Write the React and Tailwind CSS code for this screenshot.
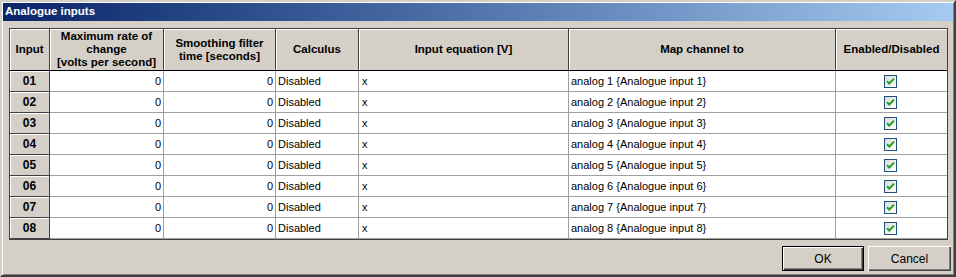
const columns = [
  { key: 'input', w: 'w-[40px]', label: ['Input'] },
  { key: 'rate', w: 'w-[114px]', label: ['Maximum rate of', 'change', '[volts per second]'] },
  { key: 'smooth', w: 'w-[112px]', label: ['Smoothing filter', 'time [seconds]'] },
  { key: 'calc', w: 'w-[83px]', label: ['Calculus'] },
  { key: 'eq', w: 'w-[210px]', label: ['Input equation [V]'] },
  { key: 'map', w: 'w-[267px]', label: ['Map channel to'] },
  { key: 'enabled', w: 'w-[111px]', label: ['Enabled/Disabled'] },
];

const rows = [1, 2, 3, 4, 5, 6, 7, 8].map((n) => ({
  id: '0' + n,
  rate: 0,
  smooth: 0,
  calc: 'Disabled',
  eq: 'x',
  map: `analog ${n} {Analogue input ${n}}`,
  enabled: true,
}));

function Check() {
  return (
    <span className="flex h-[13px] w-[13px] items-center justify-center border border-[#1c5180] bg-linear-to-br from-[#dcdcd6] to-[#ffffff]">
      <svg width="9" height="9" viewBox="0 0 9 9">
        <path d="M1 4.2 L3.3 6.5 L8 1.6" fill="none" stroke="#21a121" strokeWidth="2" />
      </svg>
    </span>
  );
}

function Button({ children, primary }) {
  return (
    <button
      className={
        'h-[25px] bg-[#d4d0c8] text-[12px] text-black ' +
        (primary
          ? 'w-[82px] border border-black shadow-[inset_1px_1px_0_#fff,inset_-1px_-1px_0_#404040,inset_-2px_-2px_0_#808080]'
          : 'w-[83px] shadow-[inset_1px_1px_0_#fff,inset_-1px_-1px_0_#404040,inset_-2px_-2px_0_#808080]')
      }
    >
      {children}
    </button>
  );
}

export default function App() {
  return (
    <div className="h-[277px] w-[956px] border-2 border-t-[#d4d0c8] border-l-[#d4d0c8] border-r-[#404040] border-b-[#404040] bg-[#d4d0c8] p-px font-['Liberation_Sans',Arial,sans-serif] shadow-[inset_1px_1px_0_#fff,inset_-1px_-1px_0_#808080]">
      {/* Title bar */}
      <div className="flex h-[18px] items-center bg-linear-to-r from-[#0a246a] to-[#a6caf0] pl-[2px] text-[11.5px] font-bold text-white">
        Analogue inputs
      </div>

      {/* Grid */}
      <div className="mx-[6px] mt-[7px] w-[939px] border border-[#404040] bg-white">
        <div className="flex h-[42px] border-b border-black">
          {columns.map((c, i) => (
            <div
              key={c.key}
              className={
                c.w +
                ' flex flex-col items-center justify-center bg-[#d4d0c8] text-center text-[11.5px] font-bold leading-[13px] text-black shadow-[inset_1px_1px_0_#fff] ' +
                (i < columns.length - 1 ? 'border-r border-[#404040]' : '')
              }
            >
              {c.label.map((l) => (
                <span key={l} className="whitespace-nowrap">{l}</span>
              ))}
            </div>
          ))}
        </div>
        {rows.map((r) => (
          <div key={r.id} className="flex h-[21px] text-[11px] text-black">
            <div className="flex w-[40px] items-center justify-center border-r border-b border-[#404040] bg-[#d4d0c8] text-[12px] font-bold shadow-[inset_1px_1px_0_#fff]">
              {r.id}
            </div>
            <div className="flex w-[114px] items-center justify-end border-r border-b border-[#a0a0a0] pr-[2px]">{r.rate}</div>
            <div className="flex w-[112px] items-center justify-end border-r border-b border-[#a0a0a0] pr-[2px]">{r.smooth}</div>
            <div className="flex w-[83px] items-center border-r border-b border-[#a0a0a0] pl-[2px]">{r.calc}</div>
            <div className="flex w-[210px] items-center border-r border-b border-[#a0a0a0] pl-[3px]">{r.eq}</div>
            <div className="flex w-[267px] items-center border-r border-b border-[#a0a0a0] pl-[2px] whitespace-nowrap">{r.map}</div>
            <div className="flex w-[111px] items-center justify-center border-b border-[#a0a0a0] pr-[2px]">
              {r.enabled && <Check />}
            </div>
          </div>
        ))}
      </div>

      {/* Buttons */}
      <div className="mt-[6px] mr-[2px] flex justify-end gap-[4px]">
        <Button primary>OK</Button>
        <Button>Cancel</Button>
      </div>
    </div>
  );
}
